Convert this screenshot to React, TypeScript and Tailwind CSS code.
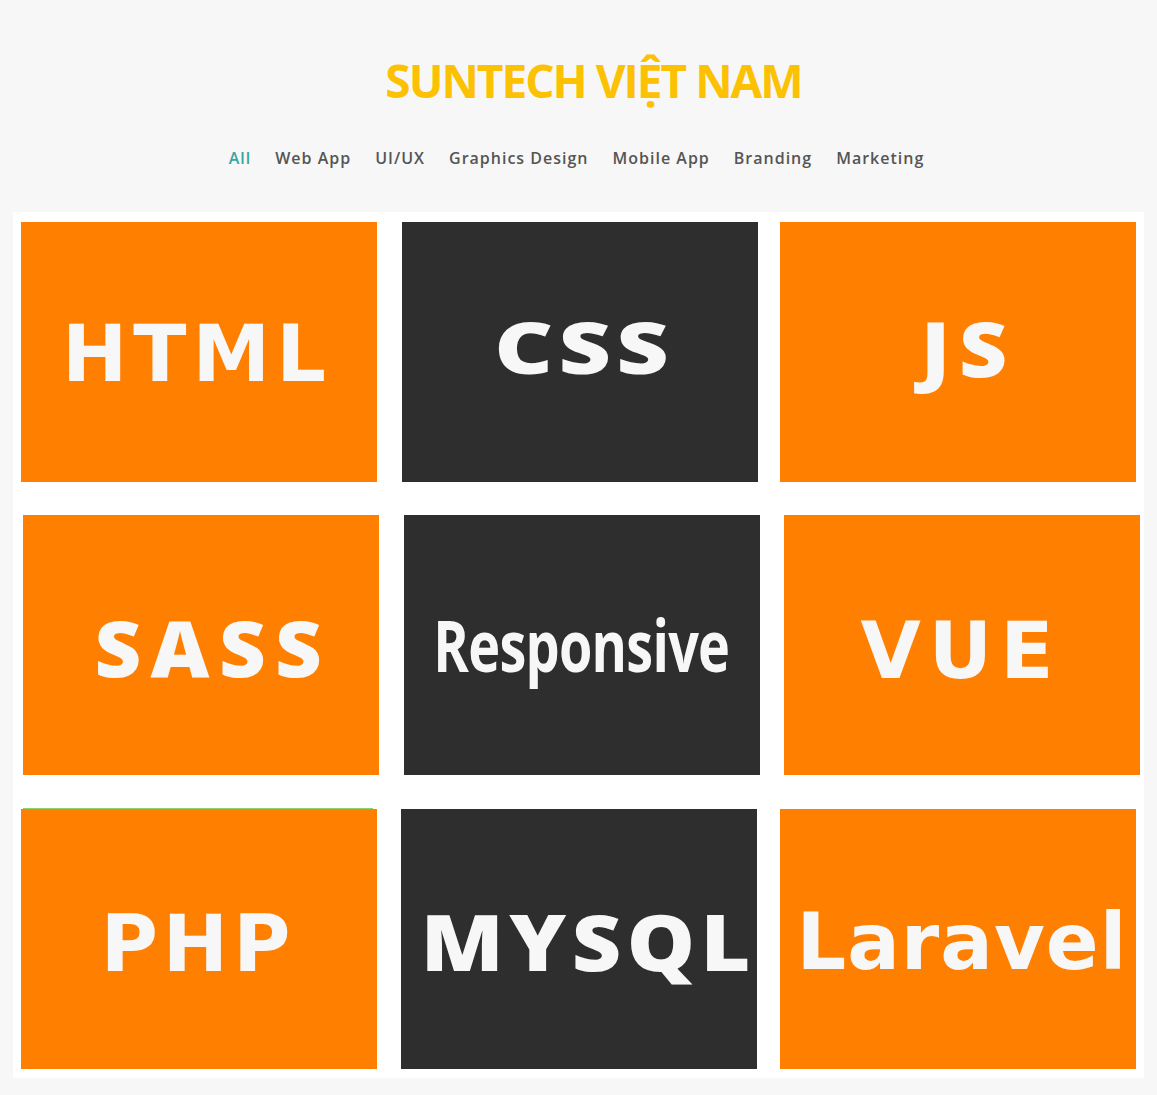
import { useState } from 'react';

// Portfolio grid - filter bar + technology tiles

type Tile = {
  label: string;
  dark?: boolean;
  font: 'dejavu' | 'open' | 'narrow';
  textClass: string;
  boxClass: string;
};

const filters = ['All', 'Web App', 'UI/UX', 'Graphics Design', 'Mobile App', 'Branding', 'Marketing'];

const rows: Tile[][] = [
  [
    { label: 'HTML', font: 'dejavu', textClass: 'text-[78px] tracking-[6px] mt-[4px] -ml-[4px]', boxClass: 'ml-[8px]' },
    { label: 'CSS', dark: true, font: 'open', textClass: 'text-[70px] tracking-[4px] scale-x-[1.3] -mt-[10px] ml-[8px]', boxClass: 'ml-[25px]' },
    { label: 'JS', font: 'open', textClass: 'text-[76px] tracking-[8px] scale-x-[1.1] -mt-[8px] ml-[20px]', boxClass: 'ml-[22px]' },
  ],
  [
    { label: 'SASS', font: 'open', textClass: 'text-[78px] tracking-[9px] scale-x-[1.04] mt-[4px] ml-[24px]', boxClass: 'ml-[10px]' },
    { label: 'Responsive', dark: true, font: 'narrow', textClass: 'text-[72px] -mt-[2px] -ml-[2px]', boxClass: 'ml-[25px]' },
    { label: 'VUE', font: 'dejavu', textClass: 'text-[78px] tracking-[8px] mt-[11px] -ml-[2px]', boxClass: 'ml-[24px]' },
  ],
  [
    { label: 'PHP', font: 'dejavu', textClass: 'text-[78px] tracking-[5px] mt-[9px] -ml-[2px]', boxClass: 'ml-[8px]' },
    { label: 'MYSQL', dark: true, font: 'open', textClass: 'text-[78px] tracking-[5px] scale-x-[1.1] mt-[4px] ml-[18px]', boxClass: 'ml-[24px]' },
    { label: 'Laravel', font: 'dejavu', textClass: 'text-[78px] tracking-[1px] mt-[5px] ml-[8px]', boxClass: 'ml-[23px]' },
  ],
];

const fontClass = {
  dejavu: "font-['DejaVu_Sans',sans-serif] font-bold",
  open: "font-['Open_Sans',sans-serif] font-extrabold",
  narrow: "font-['Open_Sans',sans-serif] font-bold scale-x-[0.75] tracking-[-1px]",
};

function TileCard({ tile }: { tile: Tile }) {
  return (
    <div
      className={`${tile.boxClass} w-[356px] h-[260px] shrink-0 flex items-center justify-center overflow-hidden ${
        tile.dark ? 'bg-[#2e2e2e]' : 'bg-[#ff7f00]'
      }`}
    >
      <span className={`${fontClass[tile.font]} ${tile.textClass} leading-none text-[#f7f7f7] whitespace-nowrap`}>
        {tile.label}
      </span>
    </div>
  );
}

export default function App() {
  const [active, setActive] = useState('All');

  return (
    <div className="min-h-[1095px] bg-[#f7f7f7] pt-[52px] pb-[17px]">
      <h1 className="pl-[30px] text-center font-['Open_Sans',sans-serif] font-bold text-[46px] leading-[56px] tracking-[-2px] text-[#fdc103]">
        SUNTECH VIỆT NAM
      </h1>

      {/* Filter bar */}
      <nav className="mt-[39px] flex justify-center gap-[24px] pr-[4px]">
        {filters.map((f) => (
          <button
            key={f}
            onClick={() => setActive(f)}
            className={`font-['Open_Sans',sans-serif] text-[16px] font-semibold tracking-[1px] leading-[22px] ${
              active === f ? 'text-[#3aa5a0]' : 'text-[#555555]'
            }`}
          >
            {f}
          </button>
        ))}
      </nav>

      {/* Tiles */}
      <div className="mt-[43px] ml-[13px] w-[1131px] bg-white pt-[10px] pb-[9px]">
        <div className="flex">
          {rows[0].map((t) => (
            <TileCard key={t.label} tile={t} />
          ))}
        </div>
        <div className="mt-[33px] flex">
          {rows[1].map((t) => (
            <TileCard key={t.label} tile={t} />
          ))}
        </div>
        <div className="mt-[33px] ml-[10px] w-[350px] h-px bg-[#8fd16f]" />
        <div className="flex">
          {rows[2].map((t) => (
            <TileCard key={t.label} tile={t} />
          ))}
        </div>
      </div>
    </div>
  );
}
